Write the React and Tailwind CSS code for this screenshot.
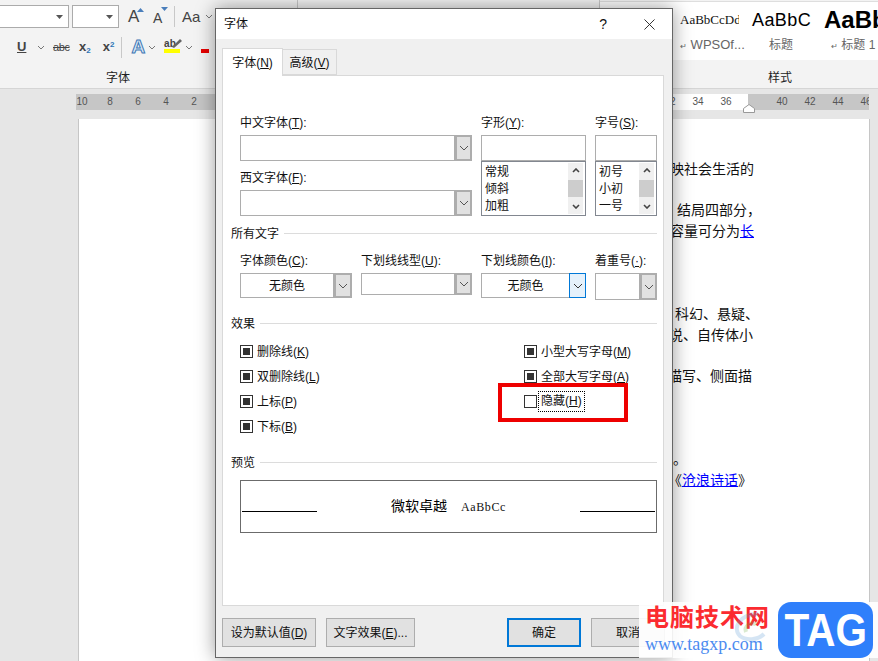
import React from 'react';

const rulerMarks = Array.from({ length: 29 }, (_, k) => {
  const value = Math.abs((k - 5) * 2);
  return value === 0 || value === 38 ? '' : value;
});

const pageLines = [
  { pad: 'pl-[591px]', text: '映社会生活的' },
  { pad: 'pl-[591px]', text: '' },
  { pad: 'pl-[598px]', text: '结局四部分，' },
  { pad: 'pl-[591px]', text: '容量可分为', link: '长' },
  { pad: 'pl-[591px]', text: '' },
  { pad: 'pl-[591px]', text: '' },
  { pad: 'pl-[591px]', text: '' },
  { pad: 'pl-[596px]', text: '科幻、悬疑、' },
  { pad: 'pl-[590px]', text: '说、自传体小' },
  { pad: 'pl-[591px]', text: '' },
  { pad: 'pl-[589px]', text: '描写、侧面描' },
  { pad: 'pl-[591px]', text: '' },
  { pad: 'pl-[591px]', text: '' },
  { pad: 'pl-[591px]', text: '' },
  { pad: 'pl-[594px]', text: '。' },
  { pad: 'pl-[589px]', text: '《', link: '沧浪诗话', after: '》' },
];

function Chevron({ className = 'w-[10px] h-[6px]', color = '#555' }) {
  return (
    <svg viewBox="0 0 10 6" className={className} fill="none" stroke={color} strokeWidth="1">
      <path d="M1 1l4 4 4-4" />
    </svg>
  );
}

function MiniChevron() {
  return (
    <svg viewBox="0 0 8 5" className="w-[8px] h-[5px]" fill="none" stroke="#777" strokeWidth="1">
      <path d="M1 1l3 3 3-3" />
    </svg>
  );
}

function Combo({ value, height = 'h-[26px]', active = false, btnWidth = 'w-[17px]' }) {
  return (
    <div className={`flex ${height}`}>
      <div className={`flex-1 min-w-0 bg-white border border-[#adadad] text-center leading-[24px] ${active ? 'border-r-0' : ''}`}>
        {value}
      </div>
      {active ? (
        <div className={`${btnWidth} flex items-center justify-center bg-[#e5f1fb] border border-[#0078d7]`}>
          <Chevron color="#333" />
        </div>
      ) : (
        <div className={`${btnWidth} flex items-center justify-center bg-[#e1e1e1] border-2 border-[#adadad]`}>
          <Chevron />
        </div>
      )}
    </div>
  );
}

function ListBox({ items }) {
  return (
    <div className="relative h-[55px] bg-white border border-[#828790] flex">
      <div className="flex-1 pl-[3px] pt-[2px] leading-[17px]">
        {items.map((item) => (
          <div key={item}>{item}</div>
        ))}
      </div>
      <div className="w-[15px] my-[1px] mr-[2px] bg-[#f0f0f0] flex flex-col items-center justify-between py-[5px]">
        <svg viewBox="0 0 8 5" className="w-[8px] h-[5px]" fill="none" stroke="#444" strokeWidth="1.6">
          <path d="M1 4l3-3 3 3" />
        </svg>
        <svg viewBox="0 0 8 5" className="w-[8px] h-[5px]" fill="none" stroke="#444" strokeWidth="1.6">
          <path d="M1 1l3 3 3-3" />
        </svg>
      </div>
      <div className="absolute right-[2px] top-[18px] w-[15px] h-[17px] bg-[#cdcdcd]" />
    </div>
  );
}

function Section({ title }) {
  return (
    <div className="flex items-center h-[16px] pl-[8px] gap-[5px]">
      <span className="translate-y-[1px]">{title}</span>
      <div className="flex-1 h-px bg-[#dcdcdc]" />
    </div>
  );
}

function Check({ label, on = true, focus = false }) {
  return (
    <div className="flex items-center h-[25px]">
      <div className="w-[13px] h-[13px] border border-[#333] bg-white flex items-center justify-center">
        {on && <div className="w-[7px] h-[7px] bg-[#333]" />}
      </div>
      <span className={focus ? 'ml-[2px] px-[2px] py-[2px] outline-1 outline-dotted outline-black leading-[15px]' : 'ml-[4px]'}>{label}</span>
    </div>
  );
}

function DlgButton({ children, width, primary = false }) {
  return (
    <div className={`${width} h-[29px] flex items-center justify-center bg-[#e1e1e1] ${primary ? 'border-2 border-[#0078d7]' : 'border border-[#adadad]'}`}>
      {children}
    </div>
  );
}

function Ribbon() {
  return (
    <div className="h-[89px] bg-[#f3f3f3] border-b border-[#d5d5d5] flex text-[#444]">
      <div className="w-[298px] border-r border-[#c8c8c8] flex flex-col">
        <div className="flex items-center pt-[5px] h-[28px]">
          <div className="w-[70px] h-[23px] -ml-px bg-white border border-[#ababab] flex items-center justify-end pr-[5px]">
            <svg viewBox="0 0 7 4" className="w-[7px] h-[4px]"><path d="M0 0h7L3.5 4z" fill="#555" /></svg>
          </div>
          <div className="w-[47px] h-[23px] ml-[3px] bg-white border border-[#ababab] flex items-center justify-end pr-[5px]">
            <svg viewBox="0 0 7 4" className="w-[7px] h-[4px]"><path d="M0 0h7L3.5 4z" fill="#555" /></svg>
          </div>
          <div className="relative ml-[9px] w-[16px] text-[17px] leading-[20px]">
            A
            <svg viewBox="0 0 7 4" className="absolute left-[9px] top-[1px] w-[7px] h-[4px]"><path d="M0 4h7L3.5 0z" fill="#4a7ebb" /></svg>
          </div>
          <div className="relative ml-[9px] w-[16px] text-[14px] leading-[20px] pt-[2px]">
            A
            <svg viewBox="0 0 7 4" className="absolute left-[8px] top-[1px] w-[7px] h-[4px]"><path d="M0 0h7L3.5 4z" fill="#4a7ebb" /></svg>
          </div>
          <div className="ml-[5px] w-px h-[21px] bg-[#c8c8c8]" />
          <div className="ml-[7px] text-[15px] leading-[20px]">Aa</div>
          <div className="ml-[5px]"><MiniChevron /></div>
        </div>
        <div className="flex items-center h-[24px] mt-[8px] -translate-y-[1px]">
          <div className="ml-[17px] w-[9px] font-bold text-[13px] leading-[14px] underline">U</div>
          <div className="ml-[11px]"><MiniChevron /></div>
          <div className="ml-[8px] w-[17px] text-[11px] tracking-[-0.4px] line-through">abc</div>
          <div className="ml-[9px] font-bold text-[13px]">x<sub className="text-[8px] text-[#2e75b6]">2</sub></div>
          <div className="ml-[12px] font-bold text-[13px]">x<sup className="text-[8px] text-[#2e75b6]">2</sup></div>
          <div className="ml-[7px] w-px h-[21px] bg-[#c8c8c8]" />
          <div className="ml-[9px] text-[19px] font-bold leading-[20px] text-[#dbe9f7] [-webkit-text-stroke:1px_#3f78b5]">A</div>
          <div className="ml-[3px]"><MiniChevron /></div>
          <div className="ml-[8px] relative w-[17px] h-[18px]">
            <span className="absolute left-0 top-[-2px] text-[10px] font-bold">ab</span>
            <svg viewBox="0 0 12 10" className="absolute left-[7px] top-0 w-[12px] h-[10px]"><path d="M1 9l8-8 2 2-8 7z" fill="#666" /></svg>
            <div className="absolute left-0 top-[11px] w-[16px] h-[4px] bg-[#ffff00]" />
          </div>
          <div className="ml-[4px]"><MiniChevron /></div>
          <div className="ml-[8px] relative w-[8px] h-[18px]">
            <div className="absolute left-0 top-[11px] w-[8px] h-[4px] bg-[#e60000]" />
          </div>
        </div>
        <div className="mt-[10px] pl-[106px] text-[12px] leading-[16px] text-[#222]">字体</div>
      </div>
      <div className="w-[302px] border-r border-[#c8c8c8]" />
      <div className="flex-1 min-w-0 flex flex-col">
        <div className="h-[59px] mt-px bg-white border-t border-[#dedede] flex pl-[80px] overflow-hidden">
          <div className="w-[72px] shrink-0">
            <div className="w-[59px] h-[35px] pt-[7px] overflow-hidden whitespace-nowrap font-['Liberation_Serif',serif] text-[13px] leading-[22px] text-[#111]">AaBbCcDd</div>
            <div className="text-[13px] leading-[16px] text-[#666] whitespace-nowrap"><span className="text-[8px]">↵</span> WPSOf...</div>
          </div>
          <div className="w-[72px] shrink-0">
            <div className="h-[35px] pt-[7px] text-[18px] leading-[22px] tracking-[0.4px] text-black whitespace-nowrap">AaBbC</div>
            <div className="text-[12px] leading-[16px] text-[#666] pl-[17px]">标题</div>
          </div>
          <div className="shrink-0">
            <div className="h-[35px] pt-[7px] text-[24px] font-bold leading-[22px] text-black whitespace-nowrap">AaBbC</div>
            <div className="text-[12px] leading-[16px] text-[#666] pl-[7px] whitespace-nowrap"><span className="text-[8px]">↵</span> 标题 1</div>
          </div>
        </div>
        <div className="mt-[10px] pl-[168px] text-[12px] leading-[16px] text-[#222]">样式</div>
      </div>
    </div>
  );
}

function Ruler() {
  return (
    <div className="pt-[5px] pl-[76px] pr-[9px]">
      <div className="relative h-[16px] overflow-hidden bg-[linear-gradient(to_right,#c6c6c6_0,#c6c6c6_140px,#fff_140px,#fff_672px,#c6c6c6_672px)]">
        <div className="flex -ml-[8px] text-[10px] leading-[16px] text-[#555] font-['Liberation_Sans',sans-serif]">
          {rulerMarks.map((mark, k) => (
            <div key={k} className="w-[28px] shrink-0 text-center">{mark}</div>
          ))}
        </div>
      </div>
    </div>
  );
}

function Dialog() {
  return (
    <div className="absolute left-[215px] top-[8px] w-[458px] h-[650px] bg-[#f0f0f0] border border-[#666] shadow-[0_0_18px_rgba(0,0,0,0.4)] text-[12px] text-[#111] flex flex-col">
      <div className="h-[30px] shrink-0 bg-white flex items-center pl-[8px]">
        <span className="flex-1">字体</span>
        <span className="text-[14px] mr-[37px]">?</span>
        <svg viewBox="0 0 12 12" className="w-[11px] h-[11px] mr-[17px]" fill="none" stroke="#222" strokeWidth="1">
          <path d="M0.5 0.5l11 11M11.5 0.5l-11 11" />
        </svg>
      </div>
      <div className="flex items-end h-[36px] pl-[6px] shrink-0">
        <div className="relative z-10 w-[61px] h-[28px] -mb-px bg-white border border-b-0 border-[#d9d9d9] flex items-center justify-center">
          <span>字体(<u>N</u>)</span>
        </div>
        <div className="w-[54px] h-[26px] pt-[2px] bg-[#f0f0f0] border border-l-0 border-[#d9d9d9] flex items-center justify-center">
          <span>高级(<u>V</u>)</span>
        </div>
      </div>
      <div className="ml-[6px] w-[442px] h-[531px] shrink-0 bg-white border border-[#d9d9d9] pr-[6px]">
        <div className="grid grid-cols-[232px_105px_62px] gap-x-[9px] ml-[17px] pt-[38px]">
          <div>
            <div className="h-[16px] leading-[18px]">中文字体(<u>T</u>):</div>
            <div className="mt-[5px]"><Combo /></div>
            <div className="mt-[8px] h-[16px] leading-[18px]">西文字体(<u>F</u>):</div>
            <div className="mt-[5px]"><Combo /></div>
          </div>
          <div>
            <div className="h-[16px] leading-[18px]">字形(<u>Y</u>):</div>
            <div className="mt-[5px] h-[26px] bg-white border border-[#adadad]" />
            <ListBox items={['常规', '倾斜', '加粗']} />
          </div>
          <div>
            <div className="h-[16px] leading-[18px]">字号(<u>S</u>):</div>
            <div className="mt-[5px] h-[26px] bg-white border border-[#adadad]" />
            <ListBox items={['初号', '小初', '一号']} />
          </div>
        </div>

        <div className="mt-[9px]"><Section title="所有文字" /></div>
        <div className="grid grid-cols-[112px_111px_105px_62px] gap-x-[9px] ml-[17px] mt-[11px] items-start">
          <div>
            <div className="h-[16px] leading-[18px]">字体颜色(<u>C</u>):</div>
            <div className="mt-[5px]"><Combo value="无颜色" height="h-[25px]" btnWidth="w-[18px]" /></div>
          </div>
          <div>
            <div className="h-[16px] leading-[18px]">下划线线型(<u>U</u>):</div>
            <div className="mt-[5px]"><Combo height="h-[22px]" /></div>
          </div>
          <div>
            <div className="h-[16px] leading-[18px]">下划线颜色(<u>I</u>):</div>
            <div className="mt-[5px]"><Combo value="无颜色" height="h-[25px]" active /></div>
          </div>
          <div>
            <div className="h-[16px] leading-[18px]">着重号(<u>·</u>):</div>
            <div className="mt-[5px]"><Combo height="h-[27px]" /></div>
          </div>
        </div>

        <div className="mt-[15px]"><Section title="效果" /></div>
        <div className="grid grid-cols-[284px_1fr] ml-[17px] mt-[8px]">
          <div>
            <Check label={<>删除线(<u>K</u>)</>} />
            <Check label={<>双删除线(<u>L</u>)</>} />
            <Check label={<>上标(<u>P</u>)</>} />
            <Check label={<>下标(<u>B</u>)</>} />
          </div>
          <div>
            <Check label={<>小型大写字母(<u>M</u>)</>} />
            <Check label={<>全部大写字母(<u>A</u>)</>} />
            <Check label={<>隐藏(<u>H</u>)</>} on={false} focus />
          </div>
        </div>

        <div className="mt-[15px]"><Section title="预览" /></div>
        <div className="ml-[17px] mt-[10px] h-[53px] border border-[#6b6b6b] flex items-center px-px">
          <div className="w-[75px] h-px bg-black mt-[9px]" />
          <div className="flex-1 flex items-center justify-center gap-[14px]">
            <span className="text-[14px] text-black">微软卓越</span>
            <span className="font-['Liberation_Serif',serif] text-[12px] tracking-[0.6px]">AaBbCc</span>
          </div>
          <div className="w-[75px] h-px bg-black mt-[9px]" />
        </div>
      </div>
      <div className="flex pl-[6px] pt-[12px]">
        <DlgButton width="w-[94px]">设为默认值(<u>D</u>)</DlgButton>
        <div className="ml-[10px]"><DlgButton width="w-[89px]">文字效果(<u>E</u>)...</DlgButton></div>
        <div className="ml-[92px]"><DlgButton width="w-[74px]" primary>确定</DlgButton></div>
        <div className="ml-[10px]"><DlgButton width="w-[74px]">取消</DlgButton></div>
      </div>
    </div>
  );
}

function Watermark() {
  return (
    <div className="absolute left-[639px] top-[602px] w-[239px] h-[56px] bg-white/90">
      <div className="flex h-full">
        <div className="pl-[6px] w-[139px] shrink-0">
          <div className="text-[24px] leading-[31px] font-bold text-[#fb2b30] tracking-[1px] whitespace-nowrap">电脑技术网</div>
          <div className="font-['Liberation_Serif',serif] text-[18px] leading-[22px] text-[#4c8bf0] whitespace-nowrap">www.tagxp.com</div>
        </div>
      </div>
      <div className="absolute left-[111px] top-[8px] flex items-center opacity-25 text-[20px] text-[#7fb2e8] whitespace-nowrap">
        <svg viewBox="0 0 40 36" className="w-[40px] h-[36px] -ml-[22px]" fill="none" strokeWidth="4">
          <path d="M30 4C12 4 4 18 12 26c6 5 18 4 24-2" stroke="#5b9bd5" />
          <path d="M28 14c-6-2-12 2-10 8" stroke="#70ad47" />
        </svg>
      </div>
      <div className="absolute right-[5px] top-0 w-[95px] h-[56px] bg-[#2f7ffb] rounded-[13px] flex items-center justify-center text-white font-bold text-[46px] leading-none font-['Liberation_Sans',sans-serif]">
        <span className="inline-block scale-x-[0.88]">TAG</span>
      </div>
    </div>
  );
}

export default function App() {
  return (
    <div className="relative w-[878px] h-[661px] overflow-hidden bg-[#e6e6e6] font-['Liberation_Sans','Noto_Sans_CJK_SC',sans-serif]">
      <Ribbon />
      <Ruler />
      <div className="mt-[9px] ml-[78px] w-[792px] h-[600px] bg-white border-x border-[#c6c6c6] pt-[40px] text-[14px] leading-[20.73px] text-[#111] whitespace-nowrap">
        {pageLines.map((line, i) => (
          <div key={i} className={`h-[20.73px] ${line.pad}`}>
            {line.text}
            {line.link && <span className="text-[#0000ff] underline">{line.link}</span>}
            {line.after}
          </div>
        ))}
      </div>
      {/* ruler indent marker */}
      <svg viewBox="0 0 12 9" className="absolute left-[743px] top-[104px] w-[12px] h-[9px]">
        <path d="M0.5 8.5V4.5L6 0.5l5.5 4v4z" fill="#fff" stroke="#999" />
      </svg>
      <Dialog />
      <div className="absolute left-[498px] top-[383px] w-[130px] h-[39px] border-4 border-[#ee0000]" />
      <Watermark />
    </div>
  );
}
